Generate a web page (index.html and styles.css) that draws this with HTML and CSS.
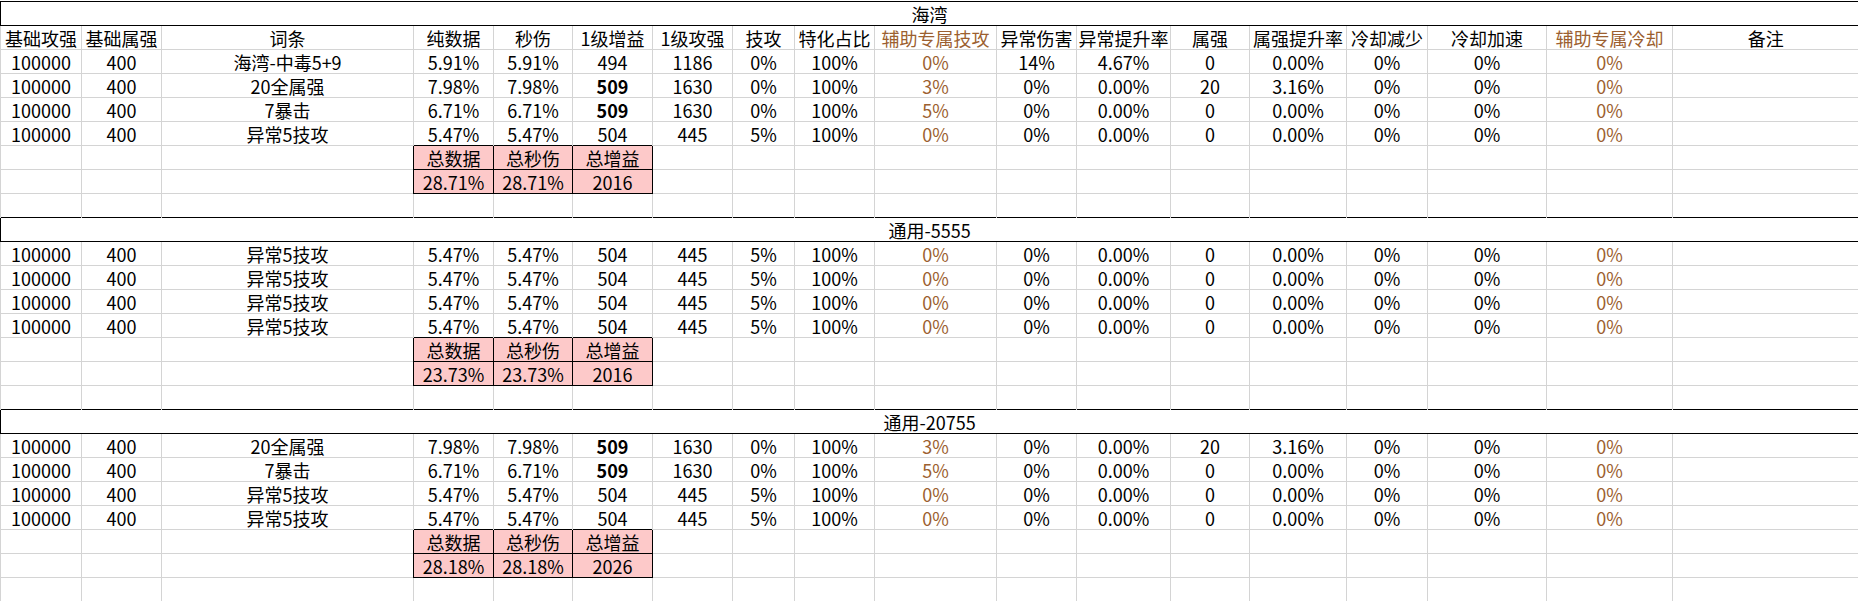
FILE: index.html
```html
<!DOCTYPE html>
<html lang="zh-CN">
<head>
<meta charset="utf-8">
<title>词条对比</title>
<link rel="stylesheet" href="styles.css">
</head>
<body>
<table class="sheet">
<colgroup>
<col class="w81"><col class="w80"><col class="w252"><col class="w80"><col class="w79"><col class="w80"><col class="w80"><col class="w62"><col class="w80"><col class="w122"><col class="w80"><col class="w94"><col class="w79"><col class="w97"><col class="w81"><col class="w119"><col class="w126"><col class="w186">
</colgroup>
<tbody>
<tr><td class="title" colspan="18">海湾</td></tr>
<tr><td>基础攻强</td><td>基础属强</td><td>词条</td><td>纯数据</td><td>秒伤</td><td>1级增益</td><td>1级攻强</td><td>技攻</td><td>特化占比</td><td class="brown">辅助专属技攻</td><td>异常伤害</td><td>异常提升率</td><td>属强</td><td>属强提升率</td><td>冷却减少</td><td>冷却加速</td><td class="brown">辅助专属冷却</td><td>备注</td></tr>
<tr><td>100000</td><td>400</td><td>海湾-中毒5+9</td><td>5.91%</td><td>5.91%</td><td>494</td><td>1186</td><td>0%</td><td>100%</td><td class="brown">0%</td><td>14%</td><td>4.67%</td><td>0</td><td>0.00%</td><td>0%</td><td>0%</td><td class="brown">0%</td><td></td></tr>
<tr><td>100000</td><td>400</td><td>20全属强</td><td>7.98%</td><td>7.98%</td><td class="b">509</td><td>1630</td><td>0%</td><td>100%</td><td class="brown">3%</td><td>0%</td><td>0.00%</td><td>20</td><td>3.16%</td><td>0%</td><td>0%</td><td class="brown">0%</td><td></td></tr>
<tr><td>100000</td><td>400</td><td>7暴击</td><td>6.71%</td><td>6.71%</td><td class="b">509</td><td>1630</td><td>0%</td><td>100%</td><td class="brown">5%</td><td>0%</td><td>0.00%</td><td>0</td><td>0.00%</td><td>0%</td><td>0%</td><td class="brown">0%</td><td></td></tr>
<tr><td>100000</td><td>400</td><td>异常5技攻</td><td>5.47%</td><td>5.47%</td><td>504</td><td>445</td><td>5%</td><td>100%</td><td class="brown">0%</td><td>0%</td><td>0.00%</td><td>0</td><td>0.00%</td><td>0%</td><td>0%</td><td class="brown">0%</td><td></td></tr>
<tr><td></td><td></td><td></td><td class="tot">总数据</td><td class="tot">总秒伤</td><td class="tot">总增益</td><td></td><td></td><td></td><td></td><td></td><td></td><td></td><td></td><td></td><td></td><td></td><td></td></tr>
<tr><td></td><td></td><td></td><td class="tot">28.71%</td><td class="tot">28.71%</td><td class="tot">2016</td><td></td><td></td><td></td><td></td><td></td><td></td><td></td><td></td><td></td><td></td><td></td><td></td></tr>
<tr><td></td><td></td><td></td><td></td><td></td><td></td><td></td><td></td><td></td><td></td><td></td><td></td><td></td><td></td><td></td><td></td><td></td><td></td></tr>

<tr><td class="title" colspan="18">通用-5555</td></tr>
<tr><td>100000</td><td>400</td><td>异常5技攻</td><td>5.47%</td><td>5.47%</td><td>504</td><td>445</td><td>5%</td><td>100%</td><td class="brown">0%</td><td>0%</td><td>0.00%</td><td>0</td><td>0.00%</td><td>0%</td><td>0%</td><td class="brown">0%</td><td></td></tr>
<tr><td>100000</td><td>400</td><td>异常5技攻</td><td>5.47%</td><td>5.47%</td><td>504</td><td>445</td><td>5%</td><td>100%</td><td class="brown">0%</td><td>0%</td><td>0.00%</td><td>0</td><td>0.00%</td><td>0%</td><td>0%</td><td class="brown">0%</td><td></td></tr>
<tr><td>100000</td><td>400</td><td>异常5技攻</td><td>5.47%</td><td>5.47%</td><td>504</td><td>445</td><td>5%</td><td>100%</td><td class="brown">0%</td><td>0%</td><td>0.00%</td><td>0</td><td>0.00%</td><td>0%</td><td>0%</td><td class="brown">0%</td><td></td></tr>
<tr><td>100000</td><td>400</td><td>异常5技攻</td><td>5.47%</td><td>5.47%</td><td>504</td><td>445</td><td>5%</td><td>100%</td><td class="brown">0%</td><td>0%</td><td>0.00%</td><td>0</td><td>0.00%</td><td>0%</td><td>0%</td><td class="brown">0%</td><td></td></tr>
<tr><td></td><td></td><td></td><td class="tot">总数据</td><td class="tot">总秒伤</td><td class="tot">总增益</td><td></td><td></td><td></td><td></td><td></td><td></td><td></td><td></td><td></td><td></td><td></td><td></td></tr>
<tr><td></td><td></td><td></td><td class="tot">23.73%</td><td class="tot">23.73%</td><td class="tot">2016</td><td></td><td></td><td></td><td></td><td></td><td></td><td></td><td></td><td></td><td></td><td></td><td></td></tr>
<tr><td></td><td></td><td></td><td></td><td></td><td></td><td></td><td></td><td></td><td></td><td></td><td></td><td></td><td></td><td></td><td></td><td></td><td></td></tr>

<tr><td class="title" colspan="18">通用-20755</td></tr>
<tr><td>100000</td><td>400</td><td>20全属强</td><td>7.98%</td><td>7.98%</td><td class="b">509</td><td>1630</td><td>0%</td><td>100%</td><td class="brown">3%</td><td>0%</td><td>0.00%</td><td>20</td><td>3.16%</td><td>0%</td><td>0%</td><td class="brown">0%</td><td></td></tr>
<tr><td>100000</td><td>400</td><td>7暴击</td><td>6.71%</td><td>6.71%</td><td class="b">509</td><td>1630</td><td>0%</td><td>100%</td><td class="brown">5%</td><td>0%</td><td>0.00%</td><td>0</td><td>0.00%</td><td>0%</td><td>0%</td><td class="brown">0%</td><td></td></tr>
<tr><td>100000</td><td>400</td><td>异常5技攻</td><td>5.47%</td><td>5.47%</td><td>504</td><td>445</td><td>5%</td><td>100%</td><td class="brown">0%</td><td>0%</td><td>0.00%</td><td>0</td><td>0.00%</td><td>0%</td><td>0%</td><td class="brown">0%</td><td></td></tr>
<tr><td>100000</td><td>400</td><td>异常5技攻</td><td>5.47%</td><td>5.47%</td><td>504</td><td>445</td><td>5%</td><td>100%</td><td class="brown">0%</td><td>0%</td><td>0.00%</td><td>0</td><td>0.00%</td><td>0%</td><td>0%</td><td class="brown">0%</td><td></td></tr>
<tr><td></td><td></td><td></td><td class="tot">总数据</td><td class="tot">总秒伤</td><td class="tot">总增益</td><td></td><td></td><td></td><td></td><td></td><td></td><td></td><td></td><td></td><td></td><td></td><td></td></tr>
<tr><td></td><td></td><td></td><td class="tot">28.18%</td><td class="tot">28.18%</td><td class="tot">2026</td><td></td><td></td><td></td><td></td><td></td><td></td><td></td><td></td><td></td><td></td><td></td><td></td></tr>
<tr><td></td><td></td><td></td><td></td><td></td><td></td><td></td><td></td><td></td><td></td><td></td><td></td><td></td><td></td><td></td><td></td><td></td><td></td></tr>
</tbody>
</table>
</body>
</html>
```

FILE: styles.css
```css
html, body {
  margin: 0;
  padding: 0;
  background: #ffffff;
}

body {
  padding-top: 1px;
  font-family: "Noto Sans CJK SC", "Noto Sans", sans-serif;
  font-size: 18px;
  color: #000000;
  overflow: hidden;
}

.sheet {
  border-collapse: collapse;
  table-layout: fixed;
  width: 1858px;
}

.w81 { width: 81px; }
.w80 { width: 80px; }
.w252 { width: 252px; }
.w79 { width: 79px; }
.w62 { width: 62px; }
.w122 { width: 122px; }
.w94 { width: 94px; }
.w97 { width: 97px; }
.w119 { width: 119px; }
.w126 { width: 126px; }
.w186 { width: 186px; }

.sheet tr {
  height: 23px;
}

.sheet td {
  padding: 0;
  height: 23px;
  line-height: 22px;
  text-align: center;
  vertical-align: middle;
  white-space: nowrap;
  overflow: hidden;
  border-top: 1px solid #d4d4d4;
  border-left: 1px solid #d4d4d4;
}

.sheet td.title {
  border: 1px solid #000000;
}

.sheet td.tot {
  border: 1px solid #000000;
  background: #fdc9c9;
}

.sheet td.brown {
  color: #9c5f30;
}

.sheet td.b {
  font-weight: 700;
}
```
